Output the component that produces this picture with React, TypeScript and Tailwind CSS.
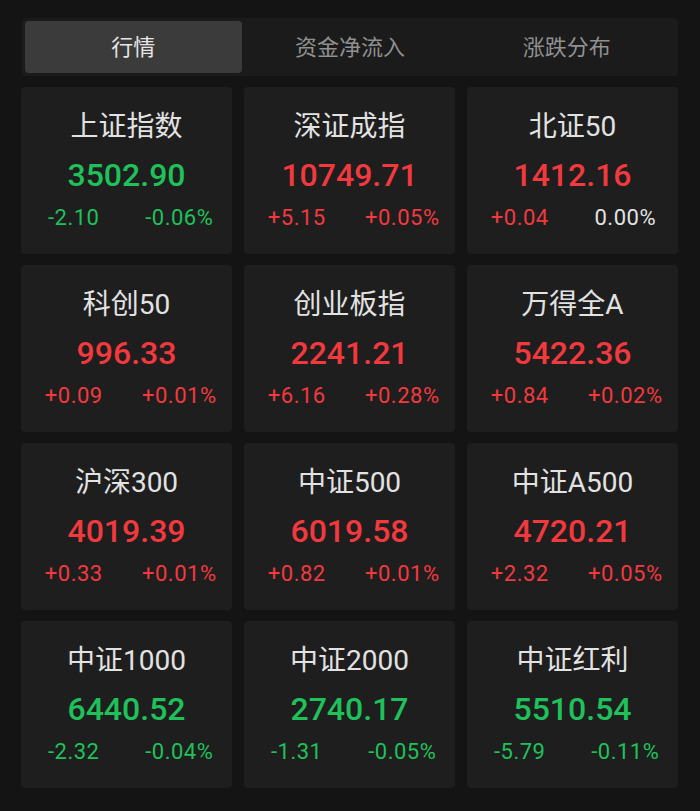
import React from "react";

type Item = {
  name: string;
  price: string;
  change: string;
  pct: string;
  dir: "up" | "down";
  pctFlat?: boolean;
};

const items: Item[] = [
  { name: "上证指数", price: "3502.90", change: "-2.10", pct: "-0.06%", dir: "down" },
  { name: "深证成指", price: "10749.71", change: "+5.15", pct: "+0.05%", dir: "up" },
  { name: "北证50", price: "1412.16", change: "+0.04", pct: "0.00%", dir: "up", pctFlat: true },
  { name: "科创50", price: "996.33", change: "+0.09", pct: "+0.01%", dir: "up" },
  { name: "创业板指", price: "2241.21", change: "+6.16", pct: "+0.28%", dir: "up" },
  { name: "万得全A", price: "5422.36", change: "+0.84", pct: "+0.02%", dir: "up" },
  { name: "沪深300", price: "4019.39", change: "+0.33", pct: "+0.01%", dir: "up" },
  { name: "中证500", price: "6019.58", change: "+0.82", pct: "+0.01%", dir: "up" },
  { name: "中证A500", price: "4720.21", change: "+2.32", pct: "+0.05%", dir: "up" },
  { name: "中证1000", price: "6440.52", change: "-2.32", pct: "-0.04%", dir: "down" },
  { name: "中证2000", price: "2740.17", change: "-1.31", pct: "-0.05%", dir: "down" },
  { name: "中证红利", price: "5510.54", change: "-5.79", pct: "-0.11%", dir: "down" },
];

const tabs = ["行情", "资金净流入", "涨跌分布"];

function Card({ item }: { item: Item }) {
  const color = item.dir === "up" ? "text-[#f2393e]" : "text-[#1fc15b]";
  return (
    <div className="h-[167px] rounded bg-[#1e1e1e] flex flex-col items-center pt-[22px]">
      <div className="text-[28px] leading-[36px] text-[#e2e2e2]">{item.name}</div>
      <div className={`mt-[10px] text-[32px] leading-[40px] font-medium ${color}`}>
        {item.price}
      </div>
      <div className="mt-[9px] w-full flex text-[22px] leading-[28px] tracking-[0.5px]">
        <div className={`flex-1 text-center ${color}`}>{item.change}</div>
        <div
          className={`flex-1 text-center ${item.pctFlat ? "text-[#e2e2e2]" : color}`}
        >
          {item.pct}
        </div>
      </div>
    </div>
  );
}

export default function App() {
  return (
    <div
      className="w-[700px] h-[811px] bg-[#141414] pt-[18px] pl-[21px] pr-[22px] overflow-hidden"
      style={{ fontFamily: 'Roboto, "Noto Sans CJK SC", sans-serif' }}
    >
      <div className="ml-[1px] h-[58px] rounded bg-[#1b1b1b] p-[3px] flex">
        {tabs.map((t, i) => (
          <div
            key={t}
            className={`flex-1 rounded flex items-center justify-center text-[22px] ${
              i === 0 ? "bg-[#3b3b3b] text-[#e6e6e6]" : "text-[#909090]"
            }`}
          >
            {t}
          </div>
        ))}
      </div>
      <div className="mt-[11px] grid grid-cols-3 gap-x-3 gap-y-[11px]">
        {items.map((it) => (
          <Card key={it.name} item={it} />
        ))}
      </div>
    </div>
  );
}
